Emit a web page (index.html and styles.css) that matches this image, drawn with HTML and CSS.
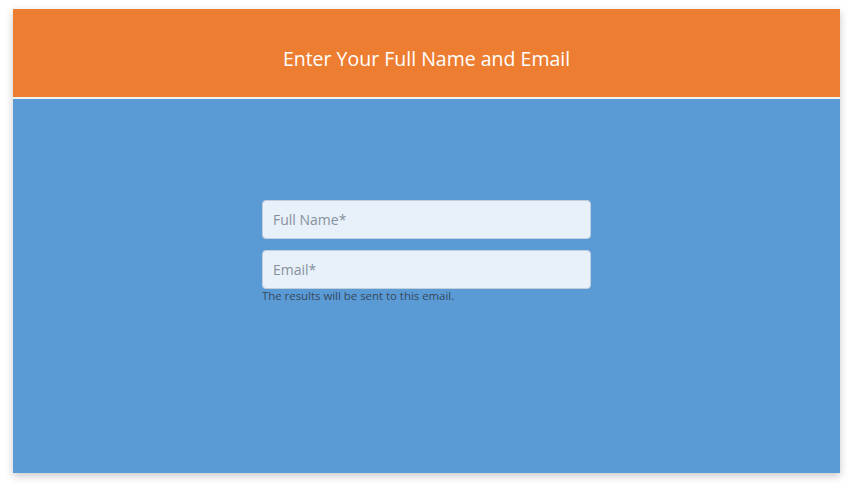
FILE: index.html
```html
<!DOCTYPE html>
<html>
<head>
<meta charset="utf-8">
<link rel="stylesheet" href="styles.css">
</head>
<body>
<div class="card">
  <header class="head">
    <h1 class="title">Enter Your Full Name and Email</h1>
  </header>
  <main class="body">
    <form class="form">
      <input class="field" type="text" placeholder="Full Name*">
      <div class="group">
        <input class="field" type="email" placeholder="Email*">
        <p class="hint">The results will be sent to this email.</p>
      </div>
    </form>
  </main>
</div>
</body>
</html>
```
FILE: styles.css
```css
html, body {
  margin: 0;
  padding: 0;
  background: #ffffff;
}
body {
  padding: 9px 12px 16px 13px;
  font-family: "Open Sans", "Noto Sans", sans-serif;
}
.card {
  width: 827px;
  height: 464px;
  display: flex;
  flex-direction: column;
  box-shadow: 0 3px 8px rgba(0, 0, 0, 0.22);
  background: #5b9bd5;
}
.head {
  height: 88px;
  background: #ed7d31;
  border-bottom: 2px solid #f4f1ee;
  display: flex;
  align-items: center;
  justify-content: center;
}
.title {
  margin: 10px 0 0 0;
  font-weight: 400;
  font-size: 19.5px;
  color: #ffffff;
  letter-spacing: 0;
}
.body {
  flex: 1;
  display: flex;
  justify-content: center;
  padding-top: 101px;
}
.form {
  width: 329px;
  display: flex;
  flex-direction: column;
  gap: 11px;
}
.field {
  box-sizing: border-box;
  width: 329px;
  height: 39px;
  margin: 0;
  padding: 0 10px;
  border: 1px solid #c3cedb;
  border-radius: 4px;
  background: #e8f0f9;
  font-family: "Open Sans", "Noto Sans", sans-serif;
  font-size: 14px;
  color: #333;
  outline: none;
}
.field::placeholder {
  color: #86909c;
}
.hint {
  margin: 0;
  font-size: 11.4px;
  color: #34495e;
  line-height: 14px;
}
```
